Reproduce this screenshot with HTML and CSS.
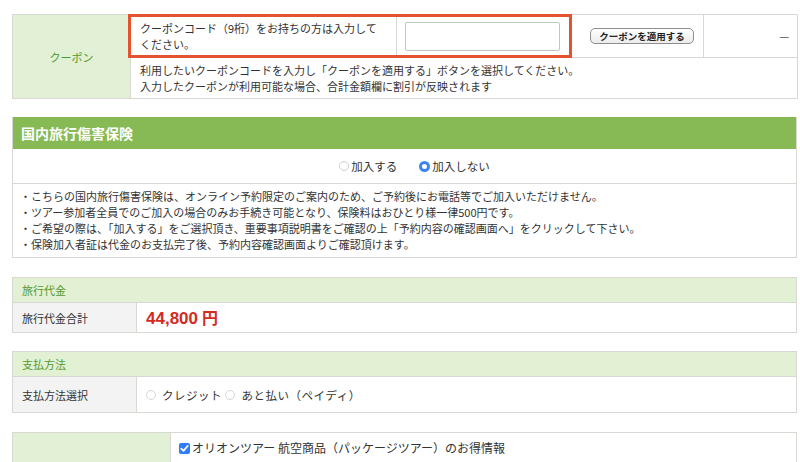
FILE: index.html
```html
<!DOCTYPE html>
<html lang="ja">
<head>
<meta charset="utf-8">
<title>予約</title>
<link rel="stylesheet" href="styles.css">
</head>
<body>
<div class="page">

  <div class="coupon-wrap">
    <table class="coupon">
      <colgroup>
        <col class="w1"><col class="w2"><col class="w3"><col class="w4"><col class="w5">
      </colgroup>
      <tr class="c-row1">
        <th rowspan="2" class="c-label">クーポン</th>
        <td class="c-desc">クーポンコード（9桁）をお持ちの方は入力して<br>ください。</td>
        <td class="c-input"><input type="text" class="code-input"></td>
        <td class="c-btn"><button class="apply-btn" type="button">クーポンを適用する</button></td>
        <td class="c-val">—</td>
      </tr>
      <tr class="c-row2">
        <td colspan="4" class="c-note">利用したいクーポンコードを入力し「クーポンを適用する」ボタンを選択してください。<br>入力したクーポンが利用可能な場合、合計金額欄に割引が反映されます</td>
      </tr>
    </table>
    <div class="highlight"></div>
  </div>

  <section class="ins">
    <h2 class="ins-title">国内旅行傷害保険</h2>
    <div class="ins-choice">
      <label class="opt"><input type="radio" name="ins" class="radio">加入する</label>
      <label class="opt"><input type="radio" name="ins" class="radio" checked>加入しない</label>
    </div>
    <ul class="ins-notes">
      <li>・こちらの国内旅行傷害保険は、オンライン予約限定のご案内のため、ご予約後にお電話等でご加入いただけません。</li>
      <li>・ツアー参加者全員でのご加入の場合のみお手続き可能となり、保険料はおひとり様一律500円です。</li>
      <li>・ご希望の際は、「加入する」をご選択頂き、重要事項説明書をご確認の上「予約内容の確認画面へ」をクリックして下さい。</li>
      <li>・保険加入者証は代金のお支払完了後、予約内容確認画面よりご確認頂けます。</li>
    </ul>
  </section>

  <table class="box price">
    <colgroup><col class="lab-col"><col></colgroup>
    <tr><th colspan="2" class="box-head">旅行代金</th></tr>
    <tr class="price-row">
      <th class="box-label">旅行代金合計</th>
      <td class="box-val"><span class="amount">44,800</span><span class="yen">円</span></td>
    </tr>
  </table>

  <table class="box pay">
    <colgroup><col class="lab-col"><col></colgroup>
    <tr><th colspan="2" class="box-head">支払方法</th></tr>
    <tr class="pay-row">
      <th class="box-label">支払方法選択</th>
      <td class="box-val">
        <label class="opt pay-opt"><input type="radio" name="pay" class="radio">クレジット</label>
        <label class="opt pay-opt"><input type="radio" name="pay" class="radio">あと払い（ペイディ）</label>
      </td>
    </tr>
  </table>

  <table class="box info">
    <colgroup><col class="info-col"><col></colgroup>
    <tr>
      <th class="info-label"></th>
      <td class="info-val">
        <label class="check-opt">
          <svg class="checkbox" width="11" height="11" viewBox="0 0 11 11"><rect x="0" y="0" width="11" height="11" rx="2" fill="#2f7cf6"/><path d="M2.3 5.6 L4.5 7.9 L8.8 2.8" fill="none" stroke="#fff" stroke-width="1.7" stroke-linecap="round" stroke-linejoin="round"/></svg>オリオンツアー 航空商品（パッケージツアー）のお得情報
        </label>
      </td>
    </tr>
  </table>

</div>
</body>
</html>
```

FILE: styles.css
```css
* { box-sizing: border-box; }

html, body {
  margin: 0;
  padding: 0;
  background: #fff;
}

body {
  font-family: "Noto Sans CJK JP", "Noto Sans", sans-serif;
  font-size: 11px;
  color: #333;
  line-height: 16px;
}

.page {
  width: 785px;
  margin-left: 12px;
  padding-top: 14px;
}

/* coupon */
.coupon-wrap {
  position: relative;
}

.coupon {
  width: 785px;
  table-layout: fixed;
  border-collapse: collapse;
  border: 1px solid #d8d8d3;
}

.w1 { width: 118px; }
.w2 { width: 266px; }
.w3 { width: 174px; }
.w4 { width: 133px; }
.w5 { width: 94px; }

.coupon th, .coupon td {
  border: 1px solid #d8d8d3;
  padding: 0;
  vertical-align: middle;
}

.c-row1 { height: 43px; }
.c-row2 { height: 41px; }

.c-label {
  background: #e2f0d6;
  color: #4e9a2c;
  font-weight: normal;
  font-size: 11px;
  text-align: center;
}

.c-desc {
  padding: 0 9px !important;
}

.c-input {
  padding-left: 8px !important;
}

.code-input {
  display: block;
  width: 155px;
  height: 29px;
  border: 1px solid #c4c4c4;
  border-radius: 2px;
  background: #fff;
  margin: 0;
}

.c-btn {
  padding-left: 19px !important;
}

.apply-btn {
  display: block;
  width: 104px;
  height: 16px;
  padding: 0;
  border: 1px solid #8e8e8e;
  border-radius: 5px;
  background: linear-gradient(#ffffff, #ececec);
  font-family: "Noto Sans CJK JP", sans-serif;
  font-weight: bold;
  font-size: 9.5px;
  line-height: 14px;
  color: #222;
}

.c-val {
  text-align: right;
  padding-right: 8px !important;
  color: #555;
  font-size: 11px;
}

.c-note {
  padding: 0 9px !important;
}

.highlight {
  position: absolute;
  left: 116px;
  top: 0;
  width: 444px;
  height: 44px;
  border: 3px solid #e4532f;
  pointer-events: none;
}

/* insurance */
.ins {
  margin-top: 18px;
  border: 1px solid #d8d8d3;
  border-top: none;
}

.ins-title {
  margin: 0;
  height: 32px;
  background: #87ba55;
  color: #fff;
  font-size: 14px;
  font-weight: bold;
  line-height: 32px;
  padding-left: 8px;
}

.ins-choice {
  height: 35px;
  display: flex;
  align-items: center;
  justify-content: center;
  gap: 22px;
  padding-left: 20px;
  border-bottom: 1px solid #d8d8d3;
  font-size: 11.5px;
}

.opt {
  display: inline-flex;
  align-items: center;
}

.radio {
  appearance: none;
  -webkit-appearance: none;
  width: 10px;
  height: 10px;
  margin: 0 2px 0 0;
  border-radius: 50%;
  border: 1px solid #cfcfcf;
  background: #fff;
}

.radio:checked {
  border: 3.5px solid #3a85f2;
  width: 11px;
  height: 11px;
}

.ins-notes {
  list-style: none;
  margin: 0;
  padding: 4px 7px 5px;
}

.ins-notes li {
  line-height: 16px;
}

/* boxes */
.box {
  width: 785px;
  border-collapse: collapse;
  table-layout: fixed;
  border: 1px solid #d8d8d3;
}

.lab-col { width: 124px; }
.info-col { width: 158px; }

.box th, .box td {
  border: 1px solid #d8d8d3;
  padding: 0;
  font-weight: normal;
  text-align: left;
}

.price { margin-top: 19px; }
.pay { margin-top: 18px; }
.info { margin-top: 19px; }

.box-head {
  height: 25px;
  background: #e2f0d3;
  color: #569a2d;
  padding-left: 9px !important;
  font-size: 11px;
}

.box-label {
  background: #f3f3f3;
  padding-left: 9px !important;
}

.price-row { height: 30px; }
.pay-row { height: 36px; }

.box-val {
  padding-left: 9px !important;
}

.amount {
  font-family: "Liberation Sans", Arial, sans-serif;
  font-weight: bold;
  font-size: 17px;
  color: #d32b1f;
}

.yen {
  font-weight: bold;
  font-size: 16px;
  color: #d32b1f;
  margin-left: 4px;
}

.pay-opt {
  font-size: 11.5px;
  letter-spacing: 0.5px;
  margin-right: 1px;
}

.pay-opt .radio {
  margin-right: 6px;
  border-color: #d6d6d6;
}

.info-label {
  background: #e2f0d6;
}

.info-val {
  height: 40px;
  vertical-align: top;
  padding: 7px 0 0 8px !important;
}

.check-opt {
  display: inline-flex;
  align-items: center;
  font-size: 12px;
}

.checkbox {
  margin-right: 2px;
}
```
